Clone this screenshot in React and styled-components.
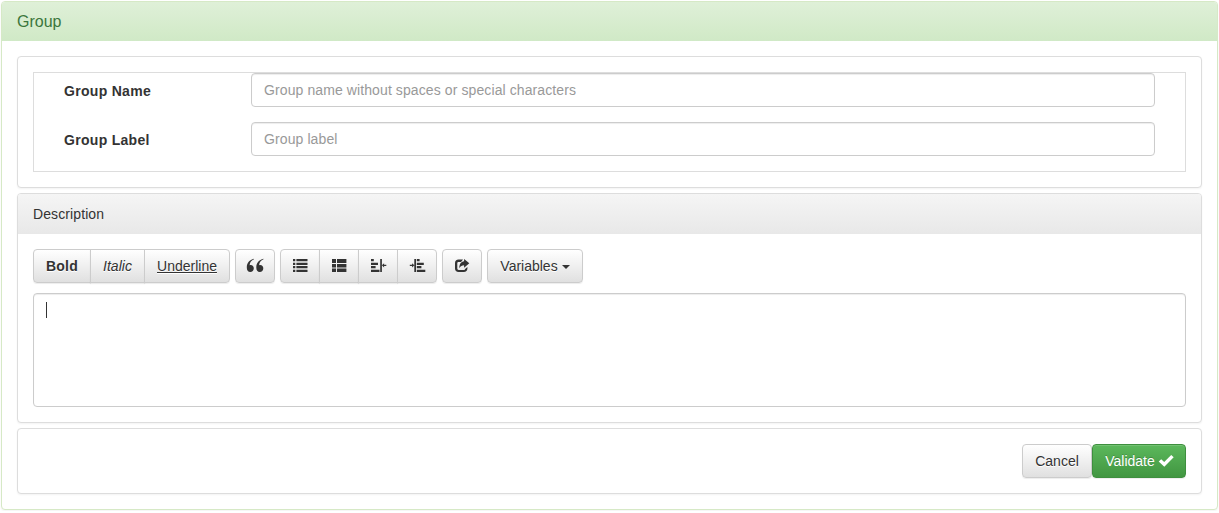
import React from "react";
import styled, { createGlobalStyle, css } from "styled-components";

const GlobalStyle = createGlobalStyle`
  *, *::before, *::after { box-sizing: border-box; }
  body {
    margin: 0;
    padding: 1px;
    background: #fff;
    color: #333;
    font: 14px/20px "Liberation Sans", Arial, sans-serif;
  }
`;

const Panel = styled.section`
  border: 1px solid ${(p) => (p.$success ? "#d6e9c6" : "#ddd")};
  border-radius: 4px;
  background: #fff;
  box-shadow: 0 1px 2px rgba(0, 0, 0, 0.05);
`;

const PanelHeading = styled.header`
  padding: 10px 15px;
  height: 40px;
  border-radius: 3px 3px 0 0;
  letter-spacing: 0.1px;
  background: linear-gradient(to bottom, #f5f5f5 0%, #e8e8e8 100%);
`;

const SuccessHeading = styled(PanelHeading)`
  height: 39px;
  color: #3c763d;
  font-size: 16px;
  line-height: 20px;
  letter-spacing: 0;
  background: linear-gradient(to bottom, #dff0d8 0%, #d0e9c6 100%);
`;

const PanelBody = styled.div`
  padding: 15px;
`;

const PanelStack = styled.div`
  display: flex;
  flex-direction: column;
  gap: 5px;
  padding: 15px;
`;

const Fields = styled.div`
  display: flex;
  flex-direction: column;
  gap: 15px;
  padding: 0 30px 15px;
  border: 1px solid #ddd;
`;

const Field = styled.label`
  display: grid;
  grid-template-columns: 187px 1fr;
  height: 34px;
`;

const FieldLabel = styled.span`
  padding-top: 8px;
  font-weight: bold;
  letter-spacing: 0.3px;
`;

const controlStyle = css`
  width: 100%;
  border: 1px solid #ccc;
  border-radius: 4px;
  padding: 6px 12px;
  background: #fff;
  color: #555;
  font: inherit;
  letter-spacing: 0.1px;
  box-shadow: inset 0 1px 1px rgba(0, 0, 0, 0.075);
  outline: none;
`;

const Input = styled.input`
  ${controlStyle}
  height: 34px;
  &::placeholder { color: #999; opacity: 1; }
`;

const Editor = styled.div`
  ${controlStyle}
  height: 114px;
  padding-top: 8px;
`;

const Caret = styled.span`
  display: block;
  width: 1px;
  height: 16px;
  background: #333;
`;

const Toolbar = styled.div`
  display: flex;
  gap: 5px;
  margin-bottom: 10px;
`;

const Button = styled.button`
  display: inline-flex;
  align-items: center;
  justify-content: center;
  width: ${(p) => p.$width}px;
  height: 34px;
  padding: 0;
  border: 1px solid #ccc;
  border-radius: 4px;
  background: linear-gradient(to bottom, #fff 0%, #e0e0e0 100%);
  color: #333;
  font: inherit;
  font-weight: ${(p) => (p.$bold ? "bold" : "normal")};
  font-style: ${(p) => (p.$italic ? "italic" : "normal")};
  letter-spacing: ${(p) => (p.$bold ? "0.2px" : "normal")};
  text-decoration: ${(p) => (p.$underline ? "underline" : "none")};
  text-shadow: 0 1px 0 #fff;
  box-shadow: inset 0 1px 0 rgba(255, 255, 255, 0.15), 0 1px 1px rgba(0, 0, 0, 0.075);
`;

const SuccessButton = styled(Button)`
  gap: 4px;
  border-color: #3e8f3e;
  background: linear-gradient(to bottom, #5cb85c 0%, #419641 100%);
  color: #fff;
  text-shadow: 0 -1px 0 rgba(0, 0, 0, 0.2);
`;

const ButtonGroup = styled.div`
  display: flex;
  ${Button} + ${Button} { margin-left: -1px; }
  ${Button}:not(:first-child) { border-top-left-radius: 0; border-bottom-left-radius: 0; }
  ${Button}:not(:last-child) { border-top-right-radius: 0; border-bottom-right-radius: 0; }
`;

const Actions = styled.div`
  display: flex;
  justify-content: flex-end;
  height: 64px;
  padding: 15px;
`;

const DropArrow = styled.span`
  margin: 2px 0 0 4px;
  border-top: 4px solid #333;
  border-left: 4px solid transparent;
  border-right: 4px solid transparent;
`;

const Glyph = styled.svg`
  display: block;
  flex: none;
  fill: currentColor;
  overflow: visible;
`;

const Icon = ({ width = 14, children }) => (
  <Glyph width={width} height="14" viewBox={`0 0 ${width} 14`} aria-hidden="true">
    {children}
  </Glyph>
);

const QuoteIcon = () => (
  <Icon width={16}>
    <path d="M7 0.2C4.4 1.2 2.9 3 2.6 6.2C5 5.5 6.8 7 6.8 9.3C6.8 11.5 5.3 13 3.3 13C1 13-0.2 11.2-0.2 8.4C-0.2 4 2.5 0.8 7-0.2Z" />
    <path transform="translate(9.5 0)" d="M7 0.2C4.4 1.2 2.9 3 2.6 6.2C5 5.5 6.8 7 6.8 9.3C6.8 11.5 5.3 13 3.3 13C1 13-0.2 11.2-0.2 8.4C-0.2 4 2.5 0.8 7-0.2Z" />
  </Icon>
);

const ListIcon = () => (
  <Icon>
    <path d="M0 0h2.3v2.3H0zM3.4 0h11.1v2.3H3.4zM0 3.7h2.3v2.3H0zM3.4 3.7h11.1v2.3H3.4zM0 7h2.3v2.3H0zM3.4 7h11.1v2.3H3.4zM0 10.7h2.3v2.3H0zM3.4 10.7h11.1v2.3H3.4z" />
  </Icon>
);

const ThListIcon = () => (
  <Icon>
    <path d="M0 0h4v4H0zM5 0h9.4v4H5zM0 5h4v3.4H0zM5 5h9.4v3.4H5zM0 9.4h4V13H0zM5 9.4h9.4V13H5z" />
  </Icon>
);

const OutdentIcon = () => (
  <Icon width={15}>
    <path d="M0 0h2.8v2.2H0zM0 3.7h7v2.3H0zM0 7h4.6v2.3H0zM0 10.7h8.5V13H0zM9.2 0h1.7v13H9.2zM10.9 6.3l2.2-2v1.4H15.3v1.3h-2.2v1.4z" />
  </Icon>
);

const IndentIcon = () => (
  <Icon width={15}>
    <path d="M6.8 0h2.8v2.2H6.8zM6.8 3.7h7v2.3h-7zM6.8 7h4.6v2.3H6.8zM6.8 10.7h8.5V13H6.8zM4.3 0h1.7v13H4.3zM4.3 6.3l-2.2-2v1.4H-.2v1.3h2.3v1.4z" />
  </Icon>
);

const ShareIcon = () => (
  <Icon>
    <path d="M8 0.6H3.6C1.4 0.6 0 2 0 4.2v5.3C0 11.7 1.4 13.1 3.6 13.1h5.2c2.2 0 3.6-1.4 3.6-3.6V8l-2.3 1.9c-.1.7-.6 1-1.3 1H3.6c-.8 0-1.3-.5-1.3-1.3V4.2c0-.8.5-1.3 1.3-1.3H6z" />
    <path d="M9.1-.1l5.2 4.4L9.1 8.7V6.2C7 6.2 5.6 7 4.3 9.2C4.3 5.2 6 2.6 9.1 2.3z" />
  </Icon>
);

const CheckIcon = () => (
  <Icon>
    <path d="M-.3 7.6L2.2 5.2L5.2 8L12.2 1L14.7 3.3L5.3 12.8z" />
  </Icon>
);

export default function App() {
  return (
    <>
      <GlobalStyle />
      <Panel as="main" $success>
        <SuccessHeading>Group</SuccessHeading>
        <PanelStack>
          <Panel>
            <PanelBody>
              <Fields>
                <Field>
                  <FieldLabel>Group Name</FieldLabel>
                  <Input placeholder="Group name without spaces or special characters" />
                </Field>
                <Field>
                  <FieldLabel>Group Label</FieldLabel>
                  <Input placeholder="Group label" />
                </Field>
              </Fields>
            </PanelBody>
          </Panel>
          <Panel>
            <PanelHeading>Description</PanelHeading>
            <PanelBody>
              <Toolbar>
                <ButtonGroup>
                  <Button $width={58} $bold>Bold</Button>
                  <Button $width={55} $italic>Italic</Button>
                  <Button $width={86} $underline>Underline</Button>
                </ButtonGroup>
                <Button $width={40} aria-label="Quote"><QuoteIcon /></Button>
                <ButtonGroup>
                  <Button $width={40} aria-label="List"><ListIcon /></Button>
                  <Button $width={40} aria-label="Blocks"><ThListIcon /></Button>
                  <Button $width={40} aria-label="Outdent"><OutdentIcon /></Button>
                  <Button $width={40} aria-label="Indent"><IndentIcon /></Button>
                </ButtonGroup>
                <Button $width={40} aria-label="Share"><ShareIcon /></Button>
                <Button $width={96}>Variables<DropArrow /></Button>
              </Toolbar>
              <Editor role="textbox"><Caret /></Editor>
            </PanelBody>
          </Panel>
          <Panel>
            <Actions>
              <Button $width={70}>Cancel</Button>
              <SuccessButton $width={94}>Validate<CheckIcon /></SuccessButton>
            </Actions>
          </Panel>
        </PanelStack>
      </Panel>
    </>
  );
}
